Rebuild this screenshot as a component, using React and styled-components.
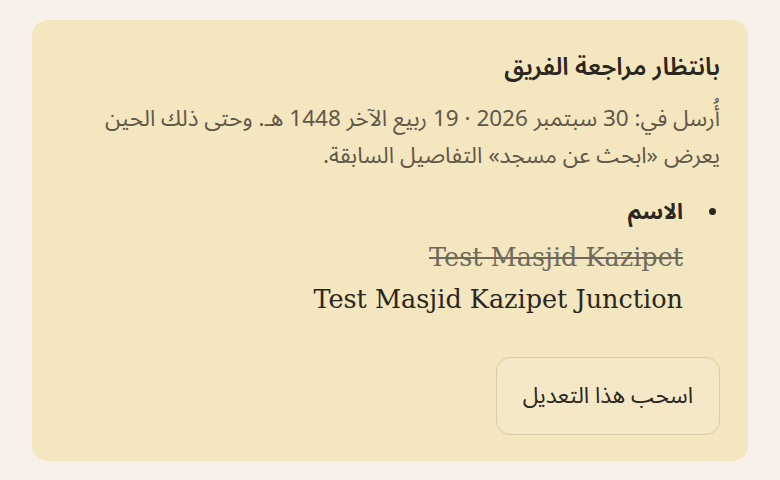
import React from "react";
import styled, { createGlobalStyle } from "styled-components";

const Global = createGlobalStyle`
  html, body {
    margin: 0;
    background: #f7f1e9;
  }
  body {
    font-family: "Noto Sans Arabic", "Noto Sans", sans-serif;
  }
`;

const Page = styled.div`
  padding: 20px 32px;
  direction: rtl;
`;

const Card = styled.section`
  background: #f4e6bf;
  border-radius: 16px;
  padding: 29px 28px 26px;
  display: flex;
  flex-direction: column;
  color: #2b2720;
`;

const Title = styled.h2`
  margin: 0;
  font-size: 24.5px;
  font-weight: 600;
  line-height: 36px;
`;

const Note = styled.p`
  margin: 16px 0 0;
  font-size: 22.5px;
  line-height: 37px;
  color: #5f584a;
`;

const Changes = styled.ul`
  margin: 17px 0 0;
  padding: 0;
  list-style: none;
`;

const Field = styled.li`
  display: grid;
  grid-template-columns: 37px 1fr;
  font-size: 22px;
`;

const Bullet = styled.span`
  grid-row: 1;
  grid-column: 1;
  width: 7px;
  height: 7px;
  border-radius: 50%;
  background: #2b2720;
  margin: 16px 4px 0 0;
`;

const Label = styled.div`
  grid-column: 2;
  font-weight: 700;
  line-height: 40px;
  margin-bottom: 4px;
`;

const Value = styled.div`
  grid-column: 2;
  direction: ltr;
  text-align: right;
  font-family: "DejaVu Serif", serif;
  font-size: 25.5px;
  line-height: 42px;
  color: ${(p) => (p.$old ? "#6e6a5c" : "#2b2720")};
  text-decoration: ${(p) => (p.$old ? "line-through" : "none")};
`;

const Actions = styled.div`
  display: flex;
  margin-top: 37px;
`;

const WithdrawButton = styled.button`
  font-family: "Noto Sans Arabic", "Noto Sans", sans-serif;
  font-size: 22.5px;
  color: #2b2720;
  background: #f4e8c6;
  border: 1.5px solid #d9cda2;
  border-radius: 14px;
  height: 78px;
  padding: 0 26px;
  cursor: pointer;
`;

export default function App() {
  return (
    <>
      <Global />
      <Page>
        <Card>
          <Title>بانتظار مراجعة الفريق</Title>
          <Note>
            أُرسل في: 30 سبتمبر 2026 · 19 ربيع الآخر 1448 هـ. وحتى ذلك الحين
            يعرض «ابحث عن مسجد» التفاصيل السابقة.
          </Note>
          <Changes>
            <Field>
              <Bullet />
              <Label>الاسم</Label>
              <Value $old>Test Masjid Kazipet</Value>
              <Value>Test Masjid Kazipet Junction</Value>
            </Field>
          </Changes>
          <Actions>
            <WithdrawButton>اسحب هذا التعديل</WithdrawButton>
          </Actions>
        </Card>
      </Page>
    </>
  );
}
